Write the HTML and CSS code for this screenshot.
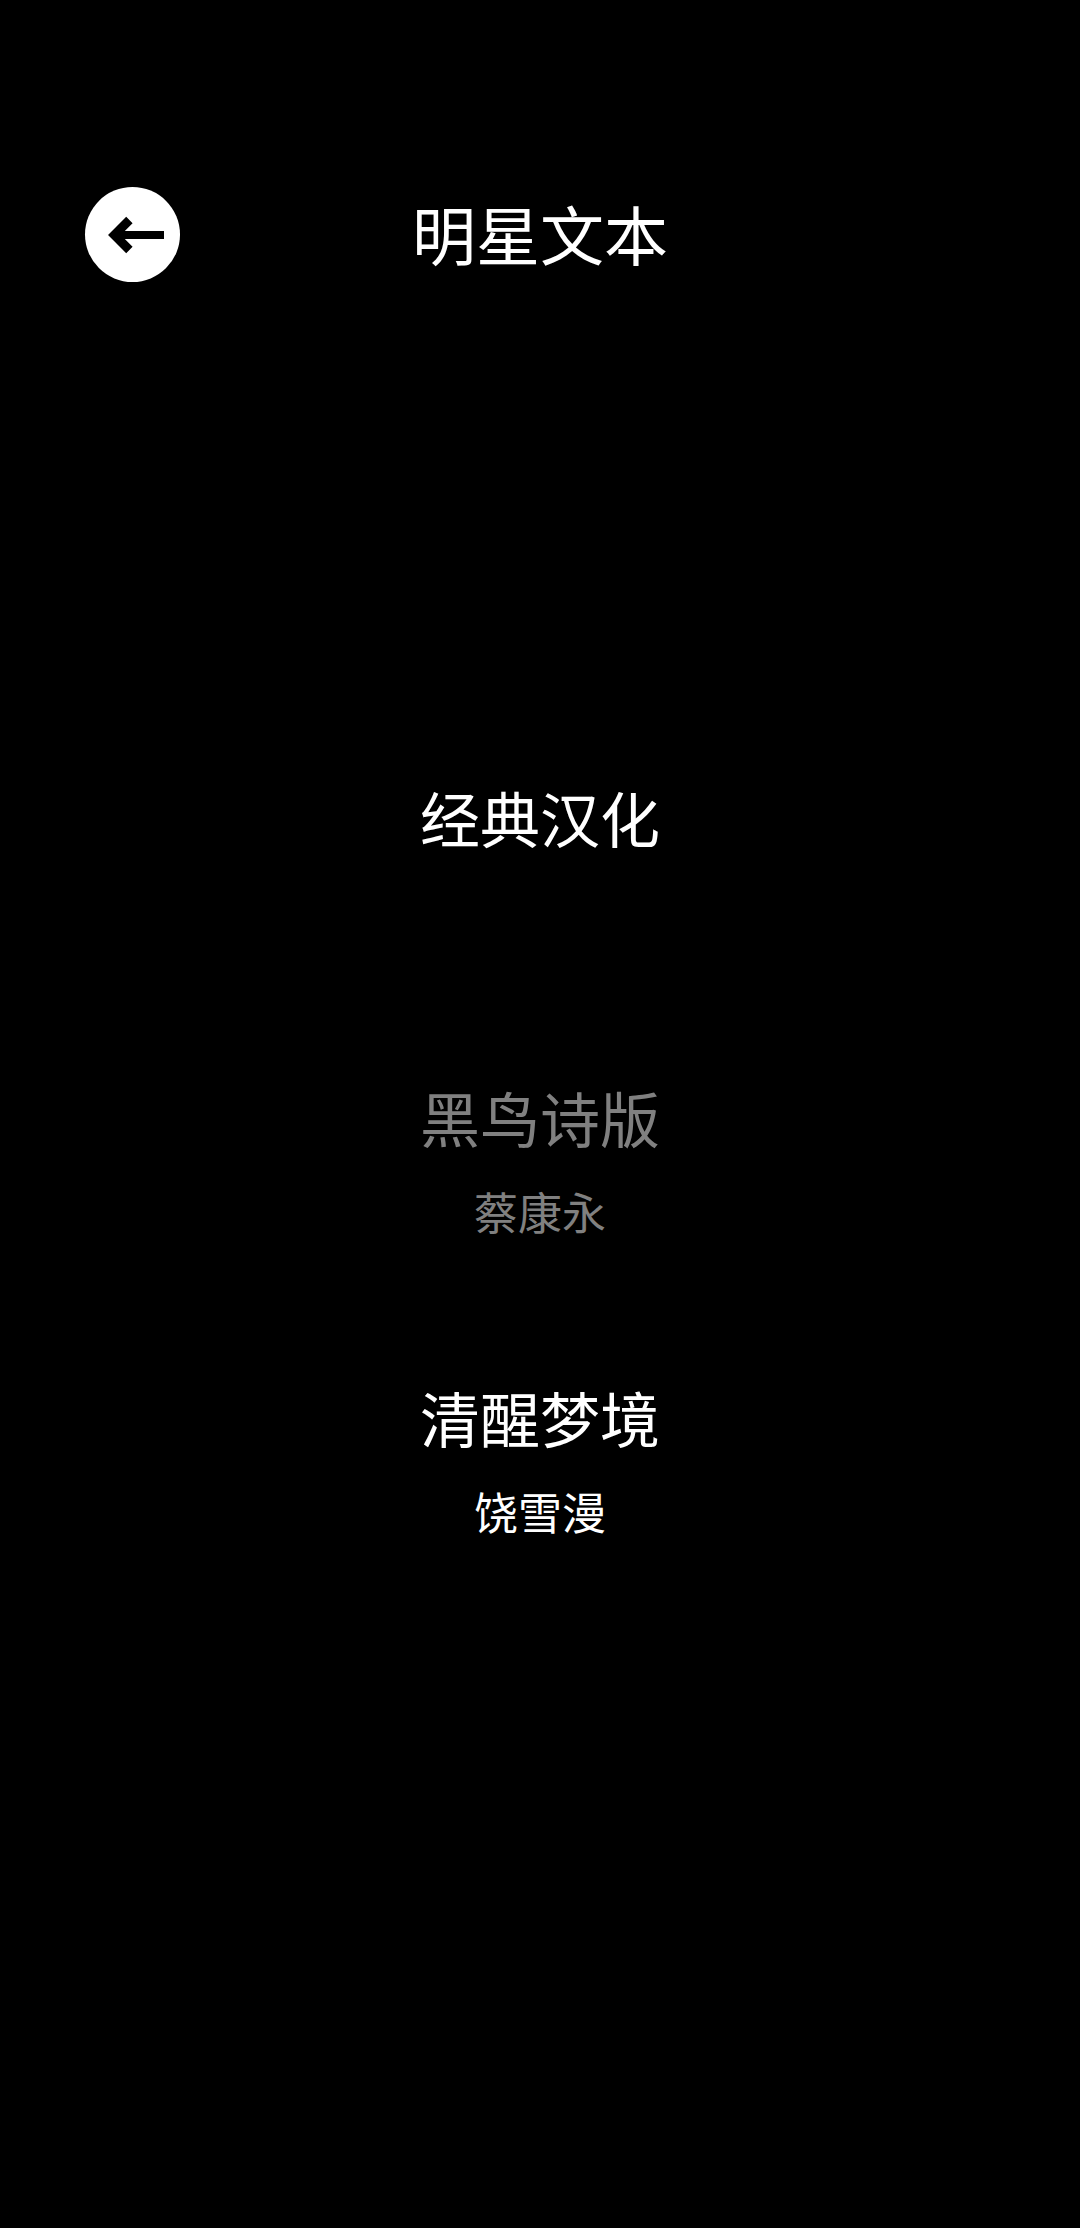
FILE: index.html
```html
<!DOCTYPE html>
<html lang="zh-CN">

<head>
  <meta charset="UTF-8" />
  <meta name="viewport" content="width=device-width, initial-scale=1.0" />
  <title>明星文本</title>
  <link rel="stylesheet" href="styles.css">
</head>

<body>
  <div class="page">
    <!-- 顶部 -->
    <div class="header">
      <div class="back">
        <svg width="56" height="40" viewBox="0 0 56 40">
          <path d="M21.4 5 L6.4 20 L21.4 35" fill="none" stroke="#000" stroke-width="9" />
          <path d="M10 20 H56" fill="none" stroke="#000" stroke-width="8" />
        </svg>
      </div>
      <div class="title">明星文本</div>
    </div>
    <!-- 版本列表 -->
    <ul class="list">
      <li class="item">
        <div class="name">经典汉化</div>
      </li>
      <li class="item off">
        <div class="name">黑鸟诗版</div>
        <div class="voice">蔡康永</div>
      </li>
      <li class="item">
        <div class="name">清醒梦境</div>
        <div class="voice">饶雪漫</div>
      </li>
    </ul>
  </div>
</body>

</html>
```

FILE: styles.css
```css
* {
  margin: 0;
  padding: 0;
}

ul {
  list-style: none;
}

html,
body {
  background: #000;
}

.page {
  width: 1080px;
  height: 2228px;
  overflow: hidden;
  color: #fff;
  font-family: "Noto Sans CJK SC", "Noto Sans", sans-serif;
}

.header {
  display: grid;
  grid-template-columns: 1fr auto 1fr;
  align-items: start;
  padding: 187px 85px 0;
}

.back {
  width: 95px;
  height: 95px;
  border-radius: 50%;
  background: #fff;
  display: flex;
  align-items: center;
  padding-left: 23px;
  box-sizing: border-box;
}

.title {
  font-size: 64px;
  line-height: 90px;
}

.list {
  margin-top: 490px;
  display: flex;
  flex-direction: column;
}

.item {
  height: 300px;
  text-align: center;
}

.item.off {
  color: #808080;
}

.name {
  font-size: 60px;
  line-height: 90px;
}

.voice {
  font-size: 44px;
  line-height: 60px;
  margin-top: 19px;
}
```
